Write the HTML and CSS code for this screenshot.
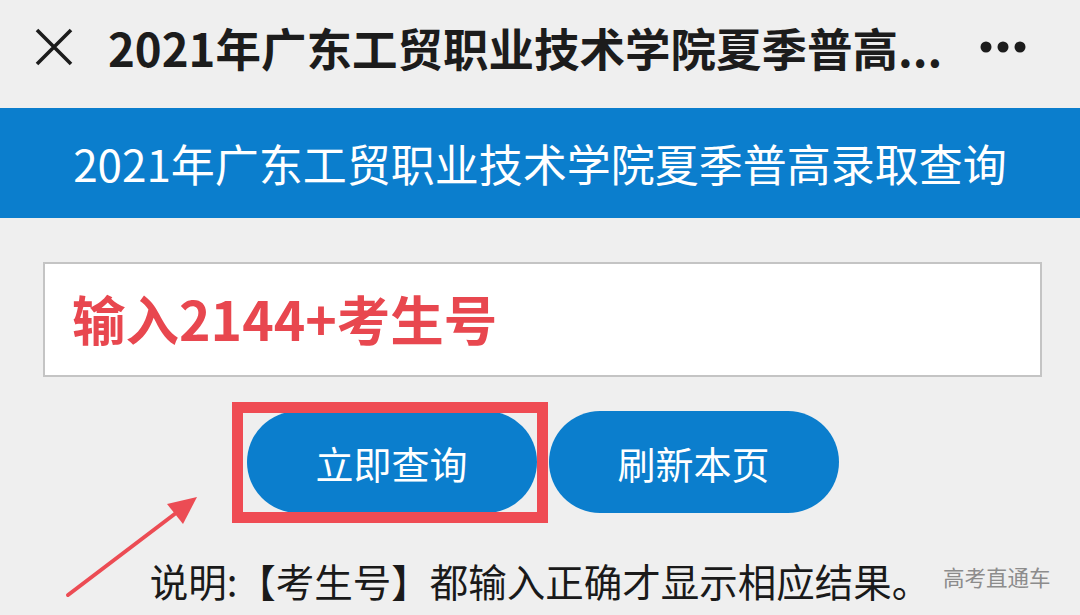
FILE: index.html
```html
<!DOCTYPE html>
<html lang="zh-CN">
<head>
  <meta charset="UTF-8" />
  <meta name="viewport" content="width=device-width, initial-scale=1.0"/>
  <title>2021年广东工贸职业技术学院夏季普高录取查询</title>
  <link rel="stylesheet" href="styles.css">
</head>
<body>

<div class="page">

  <!-- barra superior -->
  <header class="topbar">
    <svg class="close" width="38" height="38" viewBox="0 0 38 38">
      <path d="M2 2 L36 36 M36 2 L2 36" stroke="#1c1c1c" stroke-width="3.6" fill="none"/>
    </svg>
    <h1 class="title">2021年广东工贸职业技术学院夏季普高...</h1>
    <svg class="more" width="48" height="14" viewBox="0 0 48 14">
      <circle cx="6" cy="7" r="5.5" fill="#1c1c1c"/>
      <circle cx="23" cy="7" r="5.5" fill="#1c1c1c"/>
      <circle cx="40" cy="7" r="5.5" fill="#1c1c1c"/>
    </svg>
  </header>

  <div class="banner">2021年广东工贸职业技术学院夏季普高录取查询</div>

  <main class="form">
    <input class="field" type="text" placeholder="输入2144+考生号">
    <div class="actions">
      <button class="btn">立即查询</button>
      <button class="btn">刷新本页</button>
    </div>
    <p class="note">说明:【考生号】都输入正确才显示相应结果。</p>
  </main>

  <!-- marcação por cima do print -->
  <div class="mark-box"></div>
  <svg class="mark-arrow" width="145" height="115" viewBox="0 0 145 115">
    <path d="M8 105 L116 23" stroke="#ec4c54" stroke-width="4" stroke-linecap="round" fill="none"/>
    <polygon points="137,7 107,14 123,34" fill="#ec4c54"/>
  </svg>

  <span class="watermark">高考直通车</span>
</div>

</body>
</html>
```

FILE: styles.css
```css
body {
  margin: 0;
  font-family: "Noto Sans CJK SC", "Noto Sans", sans-serif;
  background: #efefef;
  color: #1c1c1c;
}
.page {
  position: relative;
  width: 1080px;
  height: 615px;
  overflow: hidden;
}
.topbar {
  height: 108px;
  box-sizing: border-box;
  padding: 0 0 14px 35px;
  display: flex;
  align-items: center;
  background: #efefef;
}
.close {
  display: block;
  flex: none;
}
.title {
  margin: 0 auto 0 35px;
  font-size: 45.5px;
  line-height: 1.2;
  font-weight: bold;
  white-space: nowrap;
  flex: none;
}
.more {
  display: block;
  flex: none;
  margin-right: 52px;
}
.banner {
  height: 110px;
  background: #0b7ecd;
  color: white;
  font-size: 44px;
  line-height: 1.2;
  display: flex;
  align-items: center;
  justify-content: center;
  white-space: nowrap;
}
.form {
  display: flex;
  flex-direction: column;
  align-items: center;
}
.field {
  display: block;
  align-self: flex-start;
  margin: 44px 0 0 43px;
  width: 999px;
  height: 115px;
  box-sizing: border-box;
  padding: 0 0 4px 27px;
  border: 2px solid #c4c4c4;
  background: white;
  font-family: inherit;
  font-size: 53.5px;
  font-weight: bold;
  color: #e8474f;
  outline: none;
}
.field::placeholder {
  color: #e8474f;
  opacity: 1;
}
.actions {
  display: flex;
  gap: 12px;
  margin: 34px 0 0 5px;
}
.btn {
  width: 290px;
  height: 102px;
  border: none;
  border-radius: 51px;
  background: #0b7ecd;
  color: white;
  font-family: inherit;
  font-size: 38px;
  cursor: pointer;
}
.note {
  margin: 43px 0 0 0;
  font-size: 38.5px;
  line-height: 48px;
  color: #1a1a1a;
  white-space: nowrap;
}

/* anotações */
.mark-box {
  position: absolute;
  left: 232px;
  top: 402px;
  width: 316px;
  height: 121px;
  box-sizing: border-box;
  border: 11px solid #ef4b53;
}
.mark-arrow {
  position: absolute;
  left: 60px;
  top: 490px;
}
.watermark {
  position: absolute;
  left: 943px;
  top: 561px;
  font-size: 21.5px;
  color: #8c8c8c;
  white-space: nowrap;
}
```
